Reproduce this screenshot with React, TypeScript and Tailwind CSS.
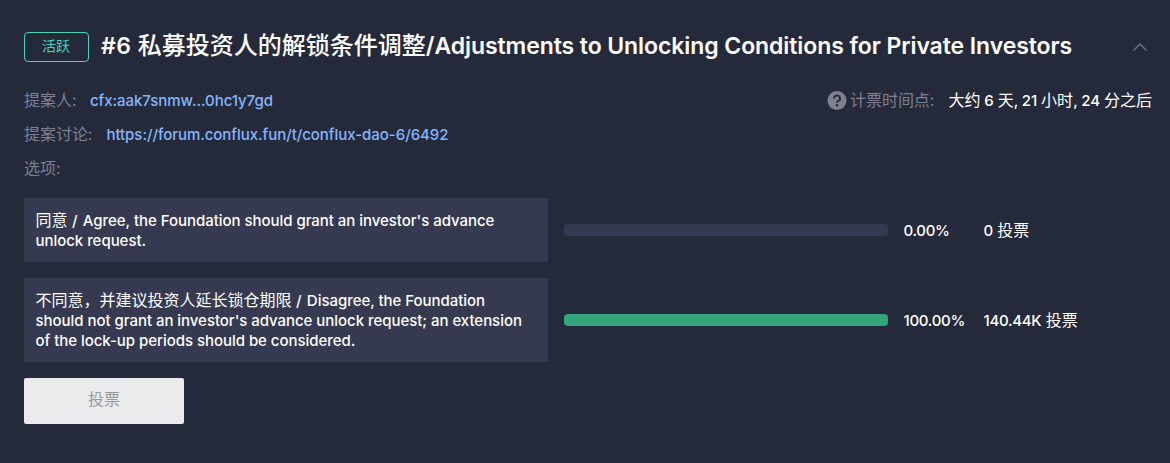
import React from "react";

const options = [
  {
    zh: "同意",
    lines: ["Agree, the Foundation should grant an investor's advance", "unlock request."],
    percent: 0,
    votes: "0",
  },
  {
    zh: "不同意，并建议投资人延长锁仓期限",
    lines: [
      "Disagree, the Foundation",
      "should not grant an investor's advance unlock request; an extension",
      "of the lock-up periods should be considered.",
    ],
    percent: 100,
    votes: "140.44K",
  },
];

function QuestionIcon() {
  return (
    <svg viewBox="0 0 20 20" className="h-5 w-5 shrink-0">
      <circle cx="10" cy="10.5" r="9.5" fill="#7e8090" />
      <path d="M7.1 8.6a2.95 2.75 0 1 1 4.5 2.1c-1 .65-1.6 1-1.6 2" fill="none" stroke="#252a3a" strokeWidth="1.9" />
      <circle cx="10" cy="15.2" r="1.25" fill="#252a3a" />
    </svg>
  );
}

// Chinese runs are set larger and lighter than the Latin text around them
function Mixed({ text }: { text: string }) {
  return (
    <>
      {text.split(/([\u4e00-\u9fff\uff0c]+)/).map((part, i) =>
        i % 2 === 1 ? (
          <span key={i} className="text-base leading-none font-normal tracking-normal">
            {part}
          </span>
        ) : (
          part
        )
      )}
    </>
  );
}

function Option({ zh, lines, percent, votes }: (typeof options)[number]) {
  return (
    <div className="flex items-center">
      <div className="w-[524px] rounded-xs bg-[#353a50] pt-[13px] pb-[11px] pl-[11.5px] leading-5 whitespace-nowrap">
        {lines.map((line, i) => (
          <div key={line} className="h-5">
            {i === 0 && (
              <span className="tracking-[0.6px]">
                <Mixed text={`${zh} / `} />
              </span>
            )}
            {line}
          </div>
        ))}
      </div>
      <div className="ml-4 h-3 w-[324px] overflow-hidden rounded bg-[#353a50]">
        <div className="h-full bg-[#33a67c]" style={{ width: `${percent}%` }} />
      </div>
      <div className="ml-[15.5px] w-20 pt-px leading-5 tracking-[-0.3px]">{percent.toFixed(2)}%</div>
      <div className="pt-px leading-5 tracking-[-0.3px]">
        {votes}
        <span className="tracking-[0.3px]"> </span>
        <Mixed text="投票" />
      </div>
    </div>
  );
}

export default function App() {
  return (
    <div className="h-[463px] w-[1170px] bg-[#252a3a] px-6 pt-8 font-['Inter','Noto_Sans_CJK_SC',sans-serif] text-[15px] font-medium tracking-[-0.04px] text-white">
      <div className="flex h-[30px] items-center">
        <span className="flex h-[30px] w-[65px] items-center justify-center rounded border border-[#44d7b6] pr-px pb-0.5 text-sm font-normal text-[#44d7b6]">
          活跃
        </span>
        <h1 className="ml-3 pb-0.5 text-2xl leading-[30px] tracking-normal whitespace-nowrap">
          <span className="text-[23px] font-semibold tracking-[0.5px]">#6 </span>
          私募投资人的解锁条件调整
          <span className="text-[23px] font-semibold tracking-[-0.08px]">
            /Adjustments to Unlocking Conditions for Private Investors
          </span>
        </h1>
        <svg viewBox="0 0 16 10" className="-mr-0.5 ml-auto h-[10px] w-4" fill="none" stroke="#696c7b" strokeWidth="1.5">
          <path d="M1.5 8.5 8 2l6.5 6.5" />
        </svg>
      </div>

      <div className="mt-7 flex h-5 items-center leading-5 whitespace-nowrap">
        <span className="text-base leading-5 font-normal text-[#7e8090]">提案人:</span>
        <span className="ml-[13.5px] pt-0.5 text-[#84b6ff]">cfx:aak7snmw...0hc1y7gd</span>
        <div className="-mr-1.5 ml-auto flex items-center">
          <QuestionIcon />
          <span className="ml-[3px] text-base leading-5 font-normal text-[#7e8090]">计票时间点:</span>
          <span className="ml-[14px] pt-0.5 tracking-[-0.08px]">
            <Mixed text="大约 6 天, 21 小时, 24 分之后" />
          </span>
        </div>
      </div>
      <div className="mt-3.5 flex h-5 items-center leading-5">
        <span className="text-base leading-5 font-normal text-[#7e8090]">提案讨论:</span>
        <span className="ml-3.5 pt-0.5 text-[#84b6ff]">https://forum.conflux.fun/t/conflux-dao-6/6492</span>
      </div>
      <div className="mt-3.5 h-5 text-base leading-5 font-normal text-[#7e8090]">选项:</div>

      <div className="mt-5 flex flex-col gap-4">
        {options.map((option) => (
          <Option key={option.zh} {...option} />
        ))}
      </div>

      <button className="mt-4 h-[46px] w-40 rounded-xs bg-[#eaebed] pb-1 text-base font-normal text-[#999]">投票</button>
    </div>
  );
}
